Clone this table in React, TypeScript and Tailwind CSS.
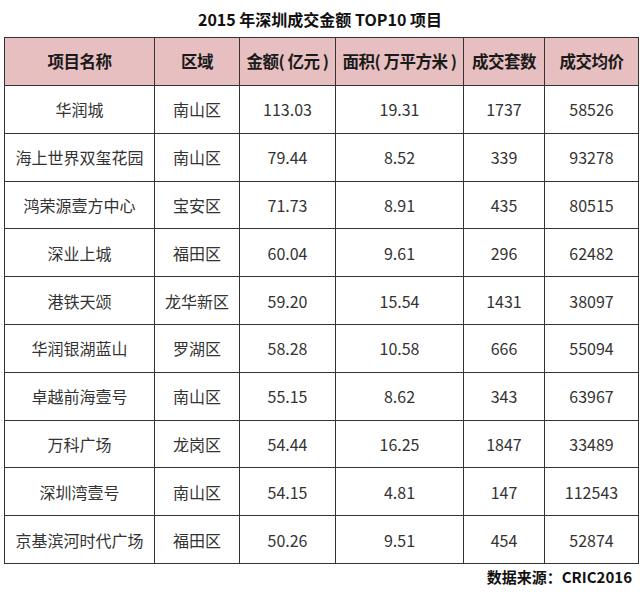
const rows = [
  ['华润城', '南山区', '113.03', '19.31', '1737', '58526'],
  ['海上世界双玺花园', '南山区', '79.44', '8.52', '339', '93278'],
  ['鸿荣源壹方中心', '宝安区', '71.73', '8.91', '435', '80515'],
  ['深业上城', '福田区', '60.04', '9.61', '296', '62482'],
  ['港铁天颂', '龙华新区', '59.20', '15.54', '1431', '38097'],
  ['华润银湖蓝山', '罗湖区', '58.28', '10.58', '666', '55094'],
  ['卓越前海壹号', '南山区', '55.15', '8.62', '343', '63967'],
  ['万科广场', '龙岗区', '54.44', '16.25', '1847', '33489'],
  ['深圳湾壹号', '南山区', '54.15', '4.81', '147', '112543'],
  ['京基滨河时代广场', '福田区', '50.26', '9.51', '454', '52874'],
];

const headers = ['项目名称', '区域', '金额( 亿元 )', '面积( 万平方米 )', '成交套数', '成交均价'];
const widths = ['w-[150px]', 'w-[85px]', 'w-[96px]', 'w-[128px]', 'w-[81px]', 'w-[94px]'];

export default function App() {
  return (
    <div className="w-[640px] h-[592px] bg-white font-['Noto_Sans_CJK_SC',sans-serif] text-[#222]">
      <div className="h-[37px] flex items-center justify-center pt-[1px] text-[16px] font-bold text-[#111]">
        2015 年深圳成交金额 TOP10 项目
      </div>
      <table className="ml-[4px] w-[634px] border-collapse table-fixed">
        <thead>
          <tr className="h-[48px] bg-[#e8bfc1]">
            {headers.map((h, i) => (
              <th
                key={h}
                className={`${widths[i]} border border-[#333] text-[16.5px] tracking-[-0.5px] font-bold text-[#1a1a1a] text-center p-0 whitespace-nowrap`}
              >
                {h}
              </th>
            ))}
          </tr>
        </thead>
        <tbody>
          {rows.map((r) => (
            <tr key={r[0]} className="h-[47.8px]">
              {r.map((c, i) => (
                <td
                  key={i}
                  className="border border-[#333] text-[16px] text-[#333] text-center p-0 whitespace-nowrap"
                >
                  {c}
                </td>
              ))}
            </tr>
          ))}
        </tbody>
      </table>
      <div className="flex justify-end pr-[8px] pt-[2px] text-[15px] font-bold text-[#111]">
        数据来源：CRIC2016
      </div>
    </div>
  );
}
